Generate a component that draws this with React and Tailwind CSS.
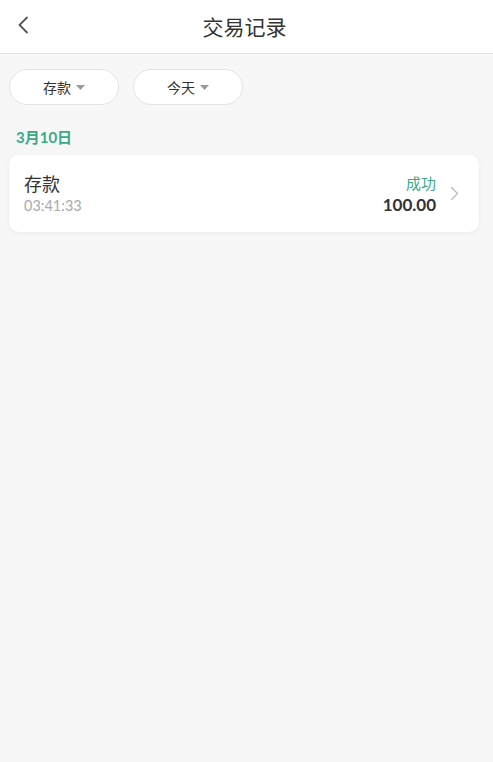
import React from "react";

export default function App() {
  return (
    <div className="min-h-[762px] w-full bg-[#f7f7f7]" style={{ fontFamily: "Lato, 'Noto Sans CJK SC', sans-serif" }}>
      <div className="relative flex h-[54px] items-center justify-center border-b border-[#e2e2e2] bg-white pr-[4px]">
        <svg className="absolute left-[16px] top-[16px]" width="14" height="18" viewBox="0 0 14 18" fill="none">
          <path d="M11 1.5 L3.5 9 L11 16.5" stroke="#555" strokeWidth="1.8" strokeLinecap="round" strokeLinejoin="round" />
        </svg>
        <span className="text-[21px] leading-[28px] text-[#333]">交易记录</span>
      </div>
      <div className="flex gap-[14px] px-[9px] pt-[15px]">
        {["存款", "今天"].map((t) => (
          <div key={t} className="flex h-[36px] w-[110px] items-center justify-center gap-[5px] rounded-full border border-[#e3e3e3] bg-white">
            <span className="text-[14px] text-[#333]">{t}</span>
            <svg width="9" height="5" viewBox="0 0 9 5"><path d="M0 0 H9 L4.5 5 Z" fill="#999" /></svg>
          </div>
        ))}
      </div>
      <div className="px-[16px] pt-[22px] text-[15px] font-bold leading-[20px] text-[#3aa987]">3月10日</div>
      <div className="ml-[9px] mr-[14px] mt-[8px] flex h-[77px] items-center rounded-[10px] bg-white pl-[15px] pr-[20px] shadow-[0_1px_4px_rgba(0,0,0,0.06)]">
        <div className="flex flex-1 flex-col">
          <span className="text-[18px] leading-[24px] text-[#333]">存款</span>
          <span className="text-[14.5px] leading-[20px] text-[#aaa]">03:41:33</span>
        </div>
        <div className="flex flex-col items-end">
          <span className="text-[15px] leading-[22px] text-[#3aa987]">成功</span>
          <span className="text-[17px] font-bold leading-[22px] text-[#333]">100.00</span>
        </div>
        <svg className="ml-[14px]" width="9" height="15" viewBox="0 0 9 15" fill="none">
          <path d="M1.5 1.5 L7.5 7.5 L1.5 13.5" stroke="#bbb" strokeWidth="1.4" strokeLinecap="round" strokeLinejoin="round" />
        </svg>
      </div>
    </div>
  );
}
